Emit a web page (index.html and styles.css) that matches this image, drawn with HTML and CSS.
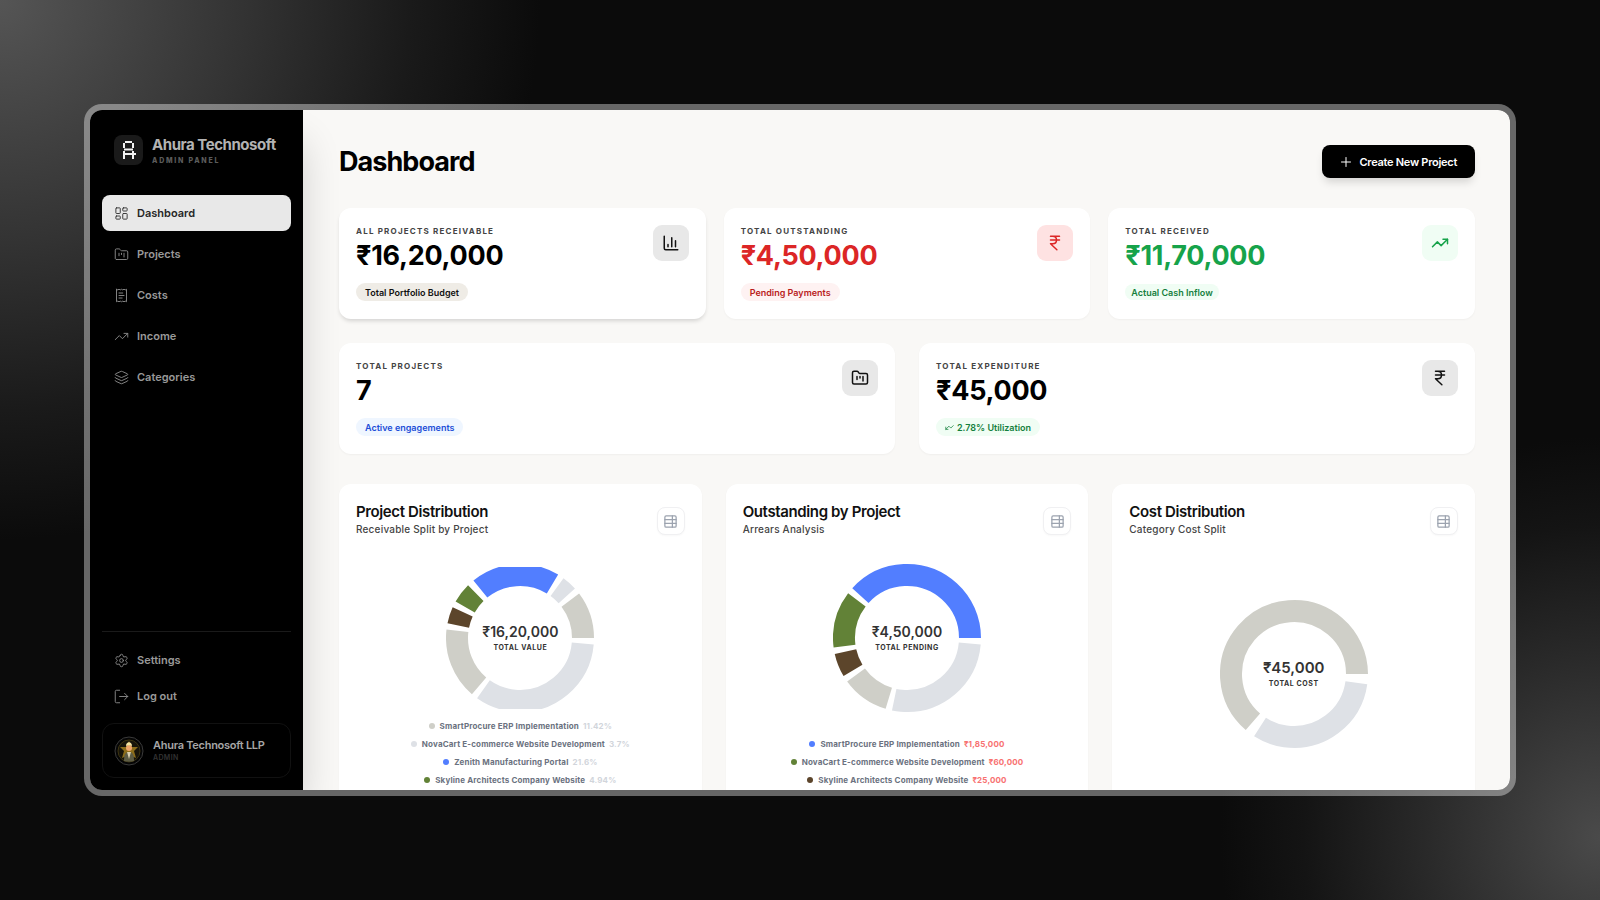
FILE: index.html
```html
<!DOCTYPE html>
<html lang="en">
<head>
  <meta charset="UTF-8">
  <meta name="viewport" content="width=device-width, initial-scale=1.0">
  <title>Dashboard - Ahura Technosoft</title>
  <link rel="stylesheet" href="styles.css">
</head>
<body>

<!-- Shared icons -->
<svg class="sprite" aria-hidden="true">
  <symbol id="icon-trend" viewBox="0 0 24 24">
    <path d="M22 7l-8.5 8.5-5-5L2 17"/>
    <path d="M16 7h6v6"/>
  </symbol>
  <symbol id="icon-folder" viewBox="0 0 24 24">
    <path d="M4 20h16a2 2 0 0 0 2-2V8a2 2 0 0 0-2-2h-7.9a2 2 0 0 1-1.7-.9l-.8-1.2A2 2 0 0 0 7.900 3H4a2 2 0 0 0-2 2v13c0 1.100.9 2 2 2Z"/>
    <path d="M8 10v4M12 10v2M16 10v6"/>
  </symbol>
  <symbol id="icon-rupee" viewBox="0 0 24 24">
    <path d="M6 3h12M6 8h12M6 13l8.500 8M6 13h3M9 13c6.667 0 6.667-10 0-10"/>
  </symbol>
  <symbol id="icon-table" viewBox="0 0 24 24">
    <rect x="3" y="3" width="18" height="18" rx="2"/>
    <path d="M15 3v18M21 9H3M21 15H3"/>
  </symbol>
</svg>

<div class="window">

  <!-- Sidebar -->
  <aside class="sidebar">
    <div class="brand">
      <div class="brand-logo">
        <svg viewBox="0 0 14 18" aria-hidden="true">
          <path d="M3 1h7M2 2v5M11 2v5M2 8.500h9M2 10v2M11 10v2M1 13h13M2 14v4M11 11v7"/>
        </svg>
      </div>
      <div class="brand-text">
        <div class="brand-name">Ahura Technosoft</div>
        <div class="brand-role">ADMIN PANEL</div>
      </div>
    </div>

    <nav class="nav">
      <a href="#" class="nav-link active">
        <svg class="icon" viewBox="0 0 24 24"><rect x="3" y="3" width="7" height="9" rx="1"/><rect x="14" y="3" width="7" height="5" rx="1"/><rect x="14" y="12" width="7" height="9" rx="1"/><rect x="3" y="16" width="7" height="5" rx="1"/></svg>
        Dashboard
      </a>
      <a href="#" class="nav-link">
        <svg class="icon"><use href="#icon-folder"/></svg>
        Projects
      </a>
      <a href="#" class="nav-link">
        <svg class="icon" viewBox="0 0 24 24"><path d="M4 2v20l2-1 2 1 2-1 2 1 2-1 2 1 2-1 2 1V2l-2 1-2-1-2 1-2-1-2 1-2-1-2 1Z"/><path d="M14 8H8M16 12H8M13 16H8"/></svg>
        Costs
      </a>
      <a href="#" class="nav-link">
        <svg class="icon"><use href="#icon-trend"/></svg>
        Income
      </a>
      <a href="#" class="nav-link">
        <svg class="icon" viewBox="0 0 24 24"><path d="M12.830 2.180a2 2 0 0 0-1.660 0L2.600 6.080a1 1 0 0 0 0 1.830l8.580 3.910a2 2 0 0 0 1.660 0l8.580-3.900a1 1 0 0 0 0-1.830z"/><path d="M2 12a1 1 0 0 0 .58.91l8.600 3.910a2 2 0 0 0 1.650 0l8.580-3.900A1 1 0 0 0 22 12"/><path d="M2 17a1 1 0 0 0 .58.91l8.600 3.910a2 2 0 0 0 1.650 0l8.580-3.900A1 1 0 0 0 22 17"/></svg>
        Categories
      </a>
    </nav>

    <div class="sidebar-footer">
      <a href="#" class="nav-link">
        <svg class="icon" viewBox="0 0 24 24"><path d="M9.670 4.140a2.340 2.340 0 0 1 4.660 0 2.340 2.340 0 0 0 3.320 1.910 2.340 2.340 0 0 1 2.330 4.030 2.340 2.340 0 0 0 0 3.840 2.340 2.340 0 0 1-2.330 4.030 2.340 2.340 0 0 0-3.320 1.910 2.340 2.340 0 0 1-4.660 0 2.340 2.340 0 0 0-3.320-1.910 2.340 2.340 0 0 1-2.330-4.030 2.340 2.340 0 0 0 0-3.840 2.340 2.340 0 0 1 2.330-4.030 2.340 2.340 0 0 0 3.320-1.910"/><circle cx="12" cy="12" r="3"/></svg>
        Settings
      </a>
      <a href="#" class="nav-link">
        <svg class="icon" viewBox="0 0 24 24"><path d="M9 22H4a2 2 0 0 1-2-2V4a2 2 0 0 1 2-2h5M17 17l5-5-5-5M22 12H9"/></svg>
        Log out
      </a>
      <div class="user-card">
        <svg class="avatar" viewBox="0 0 30 30" aria-hidden="true">
          <circle cx="15" cy="15" r="14" fill="#050505" stroke="#3a3a3a"/>
          <circle cx="15" cy="15" r="11" fill="#17140a" stroke="#3d3410"/>
          <path d="M15 5l3 6 6 0-4 4 2 7-7-3-7 3 2-7-4-4 6 0z" fill="#8c6d1a"/>
          <path d="M10 25c0-6 1-9 5-9s5 3 5 9c-3 1-7 1-10 0z" fill="#5d5c44"/>
          <path d="M13 16h4l-2 7z" fill="#d9cfae"/>
          <circle cx="15" cy="12" r="3" fill="#efa66a"/>
          <path d="M12 10c0-5 6-5 6 0-2-1-4-1-6 0z" fill="#f4e3a0"/>
        </svg>
        <div>
          <div class="user-name">Ahura Technosoft LLP</div>
          <div class="user-role">ADMIN</div>
        </div>
      </div>
    </div>
  </aside>

  <!-- Main content -->
  <main class="main">
    <header class="page-header">
      <h1>Dashboard</h1>
      <button type="button" class="create-button">
        <svg class="icon" viewBox="0 0 24 24"><path d="M3 12h18M12 3v18"/></svg>
        Create New Project
      </button>
    </header>

    <section class="stats stats-three">
      <article class="card stat raised">
        <div>
          <h2 class="stat-label">ALL PROJECTS RECEIVABLE</h2>
          <div class="stat-value">₹16,20,000</div>
          <span class="pill pill-neutral">Total Portfolio Budget</span>
        </div>
        <div class="stat-icon">
          <svg class="icon" viewBox="0 0 24 24"><path d="M3 3v16a2 2 0 0 0 2 2h16M18 17V9M13 17V5M8 17v-3"/></svg>
        </div>
      </article>
      <article class="card stat">
        <div>
          <h2 class="stat-label">TOTAL OUTSTANDING</h2>
          <div class="stat-value red">₹4,50,000</div>
          <span class="pill pill-red">Pending Payments</span>
        </div>
        <div class="stat-icon stat-icon-red">
          <svg class="icon"><use href="#icon-rupee"/></svg>
        </div>
      </article>
      <article class="card stat">
        <div>
          <h2 class="stat-label">TOTAL RECEIVED</h2>
          <div class="stat-value green">₹11,70,000</div>
          <span class="pill pill-green pill-small">Actual Cash Inflow</span>
        </div>
        <div class="stat-icon stat-icon-green">
          <svg class="icon"><use href="#icon-trend"/></svg>
        </div>
      </article>
    </section>

    <section class="stats stats-two">
      <article class="card stat">
        <div>
          <h2 class="stat-label">TOTAL PROJECTS</h2>
          <div class="stat-value">7</div>
          <span class="pill pill-blue">Active engagements</span>
        </div>
        <div class="stat-icon">
          <svg class="icon"><use href="#icon-folder"/></svg>
        </div>
      </article>
      <article class="card stat">
        <div>
          <h2 class="stat-label">TOTAL EXPENDITURE</h2>
          <div class="stat-value">₹45,000</div>
          <span class="pill pill-green"><svg class="icon flipped"><use href="#icon-trend"/></svg>2.78% Utilization</span>
        </div>
        <div class="stat-icon">
          <svg class="icon"><use href="#icon-rupee"/></svg>
        </div>
      </article>
    </section>

    <section class="charts">
      <article class="card chart">
        <header class="chart-header">
          <div>
            <h2>Project Distribution</h2>
            <p>Receivable Split by Project</p>
          </div>
          <button type="button" class="table-button" aria-label="Show project distribution table"><svg class="icon"><use href="#icon-table"/></svg></button>
        </header>
        <div class="donut donut-short">
          <svg viewBox="-74 -71 148 142" width="148" height="142" aria-hidden="true">
            <circle r="63" pathLength="360" class="seg-stone" stroke-dasharray="37 323" transform="rotate(-37)"/>
            <circle r="63" pathLength="360" class="seg-mist" stroke-dasharray="12 348" transform="rotate(-54)"/>
            <circle r="63" pathLength="360" class="seg-blue" stroke-dasharray="70 290" transform="rotate(-129)"/>
            <circle r="63" pathLength="360" class="seg-green" stroke-dasharray="16 344" transform="rotate(-150.500)"/>
            <circle r="63" pathLength="360" class="seg-brown" stroke-dasharray="13 347" transform="rotate(-168.500)"/>
            <circle r="63" pathLength="360" class="seg-stone" stroke-dasharray="56 304" transform="rotate(-229.500)"/>
            <circle r="63" pathLength="360" class="seg-mist" stroke-dasharray="120.500 239.500" transform="rotate(-355)"/>
          </svg>
          <div class="donut-center">
            <strong>₹16,20,000</strong>
            <span>TOTAL VALUE</span>
          </div>
        </div>
        <ul class="legend">
          <li><i class="dot dot-stone"></i>SmartProcure ERP Implementation <span class="percent">11.42%</span></li>
          <li><i class="dot dot-mist"></i>NovaCart E-commerce Website Development <span class="percent">3.7%</span></li>
          <li><i class="dot dot-blue"></i>Zenith Manufacturing Portal <span class="percent">21.6%</span></li>
          <li><i class="dot dot-green"></i>Skyline Architects Company Website <span class="percent">4.94%</span></li>
        </ul>
      </article>

      <article class="card chart">
        <header class="chart-header">
          <div>
            <h2>Outstanding by Project</h2>
            <p>Arrears Analysis</p>
          </div>
          <button type="button" class="table-button" aria-label="Show outstanding table"><svg class="icon"><use href="#icon-table"/></svg></button>
        </header>
        <div class="donut">
          <svg viewBox="-74 -89 148 178" width="148" height="178" aria-hidden="true">
            <circle r="63" pathLength="360" class="seg-blue" stroke-dasharray="137.700 222.300" transform="rotate(-137.700)"/>
            <circle r="63" pathLength="360" class="seg-green" stroke-dasharray="44.700 315.300" transform="rotate(-187.400)"/>
            <circle r="63" pathLength="360" class="seg-brown" stroke-dasharray="18.600 341.400" transform="rotate(-211)"/>
            <circle r="63" pathLength="360" class="seg-stone" stroke-dasharray="37.200 322.800" transform="rotate(-253.200)"/>
            <circle r="63" pathLength="360" class="seg-mist" stroke-dasharray="96.800 263.200" transform="rotate(-355)"/>
          </svg>
          <div class="donut-center">
            <strong>₹4,50,000</strong>
            <span>TOTAL PENDING</span>
          </div>
        </div>
        <ul class="legend">
          <li><i class="dot dot-blue"></i>SmartProcure ERP Implementation <span class="amount">₹1,85,000</span></li>
          <li><i class="dot dot-green"></i>NovaCart E-commerce Website Development <span class="amount">₹60,000</span></li>
          <li><i class="dot dot-brown"></i>Skyline Architects Company Website <span class="amount">₹25,000</span></li>
        </ul>
      </article>

      <article class="card chart">
        <header class="chart-header">
          <div>
            <h2>Cost Distribution</h2>
            <p>Category Cost Split</p>
          </div>
          <button type="button" class="table-button" aria-label="Show cost distribution table"><svg class="icon"><use href="#icon-table"/></svg></button>
        </header>
        <div class="donut donut-large">
          <svg viewBox="-74 -125 148 250" width="148" height="250" aria-hidden="true">
            <circle r="63" pathLength="360" class="seg-stone" stroke-dasharray="229.300 130.700" transform="rotate(-229.300)"/>
            <circle r="63" pathLength="360" class="seg-mist" stroke-dasharray="114.700 245.300" transform="rotate(-352)"/>
          </svg>
          <div class="donut-center">
            <strong>₹45,000</strong>
            <span>TOTAL COST</span>
          </div>
        </div>
      </article>
    </section>
  </main>
</div>

</body>
</html>
```
FILE: styles.css
```css
* {
  box-sizing: border-box;
}

body {
  margin: 0;
  height: 100vh;
  padding: 104px 84px;
  overflow: hidden;
  font-family: Inter, "Liberation Sans", sans-serif;
  background:
    radial-gradient(ellipse 540px 540px at 0 0, #555 0%, #333 45%, #1a1a1a 76%, rgba(11, 11, 11, 0) 100%),
    radial-gradient(ellipse 380px 400px at 100% 93%, #4a4a4a 0%, #2a2a2a 45%, #141414 78%, rgba(11, 11, 11, 0) 100%),
    #0b0b0b;
}

h1, h2, p, ul {
  margin: 0;
  padding: 0;
}

button {
  font-family: inherit;
  cursor: pointer;
}

.sprite {
  display: none;
}

.icon {
  width: 15px;
  height: 15px;
  flex-shrink: 0;
  fill: none;
  stroke: currentColor;
  stroke-width: 2;
  stroke-linecap: round;
  stroke-linejoin: round;
}

/* Framed window */
.window {
  display: flex;
  height: 100%;
  overflow: hidden;
  border: 6px solid rgba(255, 255, 255, 0.38);
  border-radius: 18px;
  background: #f9f8f6;
  background-clip: padding-box;
}

/* Sidebar */
.sidebar {
  display: flex;
  flex-direction: column;
  width: 213px;
  flex-shrink: 0;
  padding: 25px 12px 12px;
  background: #000;
  box-shadow: 8px 24px 36px -8px rgba(0, 0, 0, 0.16);
}

.brand {
  display: flex;
  align-items: flex-start;
  gap: 9px;
  padding: 0 12px;
}

.brand-logo {
  display: flex;
  align-items: center;
  justify-content: center;
  width: 29px;
  height: 30px;
  border-radius: 8px;
  background: #1a1a1a;
}

.brand-logo svg {
  width: 14px;
  height: 18px;
  fill: none;
  stroke: #f2f2f2;
  stroke-width: 2;
}

.brand-name {
  font-size: 15px;
  line-height: 19px;
  font-weight: 700;
  letter-spacing: -0.03em;
  color: #b3b3b3;
}

.brand-role {
  font-size: 7px;
  line-height: 13px;
  font-weight: 800;
  letter-spacing: 0.25em;
  color: #5c5c5c;
}

.nav {
  display: flex;
  flex-direction: column;
  gap: 5px;
  margin-top: 28px;
}

.nav-link {
  display: flex;
  align-items: center;
  gap: 8px;
  height: 36px;
  padding: 0 12px;
  border-radius: 8px;
  font-size: 11px;
  font-weight: 600;
  color: #999;
  text-decoration: none;
}

.nav-link .icon {
  stroke-width: 1.5;
  color: #8a8a8a;
}

.nav-link.active {
  background: #e8e8e8;
  color: #262626;
}

.nav-link.active .icon {
  color: #333;
}

.sidebar-footer {
  margin-top: auto;
  padding-top: 10px;
  border-top: 1px solid #1a1a1a;
}

.user-card {
  display: flex;
  align-items: center;
  gap: 9px;
  height: 55px;
  margin-top: 9px;
  padding: 0 11px;
  border: 1px solid #111;
  border-radius: 12px;
}

.avatar {
  width: 30px;
  height: 30px;
}

.user-name {
  font-size: 11px;
  line-height: 14px;
  font-weight: 600;
  letter-spacing: -0.025em;
  color: #a6a6a6;
}

.user-role {
  font-size: 7px;
  line-height: 11px;
  font-weight: 600;
  letter-spacing: 0.05em;
  color: #333;
}

/* Main content */
.main {
  flex: 1;
  min-width: 0;
  padding: 35px 35px 0 36px;
}

.page-header {
  display: flex;
  align-items: center;
  justify-content: space-between;
  margin-bottom: 30px;
}

.page-header h1 {
  font-size: 27px;
  line-height: 33px;
  font-weight: 700;
  letter-spacing: -0.035em;
  color: #000;
}

.create-button {
  display: flex;
  align-items: center;
  gap: 7px;
  height: 33px;
  padding: 0 18px;
  border: 0;
  border-radius: 8px;
  background: #000;
  color: #fff;
  font-size: 11px;
  font-weight: 600;
  letter-spacing: -0.025em;
  box-shadow: 0 6px 9px -2px rgba(0, 0, 0, 0.15);
}

.create-button .icon {
  width: 12px;
  height: 12px;
}

.card {
  border-radius: 12px;
  background: #fff;
  box-shadow: 0 1px 2px rgba(0, 0, 0, 0.04);
}

.raised {
  box-shadow: 0 3px 4px -1px rgba(0, 0, 0, 0.15);
}

/* Stat cards */
.stats {
  display: grid;
}

.stats-three {
  grid-template-columns: repeat(3, 1fr);
  gap: 18px;
}

.stats-two {
  grid-template-columns: repeat(2, 1fr);
  gap: 24px;
  margin-top: 24px;
}

.stat {
  display: flex;
  justify-content: space-between;
  height: 111px;
  padding: 17px;
}

.stat-label {
  font-size: 8px;
  line-height: 13px;
  font-weight: 700;
  letter-spacing: 0.15em;
  color: #444;
}

.stat-value {
  margin-bottom: 9px;
  font-size: 27px;
  line-height: 36px;
  font-weight: 700;
  letter-spacing: -0.01em;
  color: #000;
}

.stat-value.red {
  color: #dc2626;
}

.stat-value.green {
  color: #16a34a;
}

.pill {
  display: flex;
  align-items: center;
  gap: 3px;
  width: max-content;
  height: 18px;
  padding: 0 9px;
  border-radius: 9px;
  font-size: 9px;
  font-weight: 600;
}

.pill-small {
  height: 16px;
  margin-top: 10px;
  padding: 0 6px;
}

.pill .icon {
  width: 9px;
  height: 9px;
}

.flipped {
  transform: rotate(180deg);
}

.pill-neutral {
  background: #efece6;
  color: #111;
}

.pill-red {
  background: #fef2f2;
  color: #b91c1c;
}

.pill-green {
  background: #f0fdf4;
  color: #15803d;
}

.pill-blue {
  background: #eff6ff;
  color: #1d4ed8;
}

.stat-icon {
  display: flex;
  align-items: center;
  justify-content: center;
  width: 36px;
  height: 36px;
  border-radius: 9px;
  background: #e8e8e8;
  color: #111;
}

.stat-icon .icon {
  width: 18px;
  height: 18px;
}

.stat-icon-red {
  background: #fee2e2;
  color: #dc2626;
}

.stat-icon-green {
  background: #f0fdf4;
  color: #16a34a;
}

/* Chart cards */
.charts {
  display: grid;
  grid-template-columns: repeat(3, 1fr);
  gap: 24px;
  margin-top: 30px;
}

.chart {
  min-height: 340px;
  padding: 18px 17px;
}

.chart-header {
  display: flex;
  align-items: flex-end;
  justify-content: space-between;
  height: 33px;
}

.chart-header h2 {
  font-size: 15px;
  line-height: 20px;
  font-weight: 600;
  letter-spacing: -0.025em;
  color: #111;
}

.chart-header > div {
  align-self: flex-start;
}

.chart-header p {
  font-size: 10px;
  line-height: 15px;
  font-weight: 500;
  letter-spacing: 0.02em;
  color: #444;
}

.table-button {
  display: flex;
  align-items: center;
  justify-content: center;
  width: 28px;
  height: 28px;
  padding: 0;
  border: 1px solid #f0f0f2;
  border-radius: 8px;
  background: #fff;
  color: #9ca3af;
  box-shadow: 0 1px 2px rgba(0, 0, 0, 0.03);
}

/* Donuts: ring and its total share one grid cell */
.donut {
  display: grid;
  place-items: center;
  margin-top: 14px;
}

.donut > * {
  grid-area: 1 / 1;
}

.donut-short {
  margin-top: 32px;
}

.donut circle {
  fill: none;
  stroke-width: 22;
}

.donut .seg-stone { stroke: #cfcfc8; }
.donut .seg-mist { stroke: #dee1e6; }
.donut .seg-blue { stroke: #527eff; }
.donut .seg-green { stroke: #628237; }
.donut .seg-brown { stroke: #5c452b; }

.donut-center {
  display: flex;
  flex-direction: column;
  align-items: center;
  color: #333;
}

.donut-center strong {
  font-size: 14px;
  line-height: 18px;
  font-weight: 600;
}

.donut-large strong {
  font-size: 15px;
}

.donut-center span {
  font-size: 7px;
  line-height: 13px;
  font-weight: 700;
  letter-spacing: 0.08em;
}

.legend {
  margin-top: 8px;
  list-style: none;
}

.legend li {
  display: flex;
  align-items: center;
  justify-content: center;
  gap: 4px;
  height: 18px;
  font-size: 8px;
  font-weight: 700;
  letter-spacing: 0.02em;
  color: #6b7280;
}

.dot {
  width: 6px;
  height: 6px;
  margin-right: 1px;
  border-radius: 50%;
}

.dot-stone { background: #cfcfc8; }
.dot-mist { background: #dee1e6; }
.dot-blue { background: #527eff; }
.dot-green { background: #628237; }
.dot-brown { background: #5c452b; }

.percent {
  color: #d1d5db;
}

.amount {
  color: #f87171;
}
```
